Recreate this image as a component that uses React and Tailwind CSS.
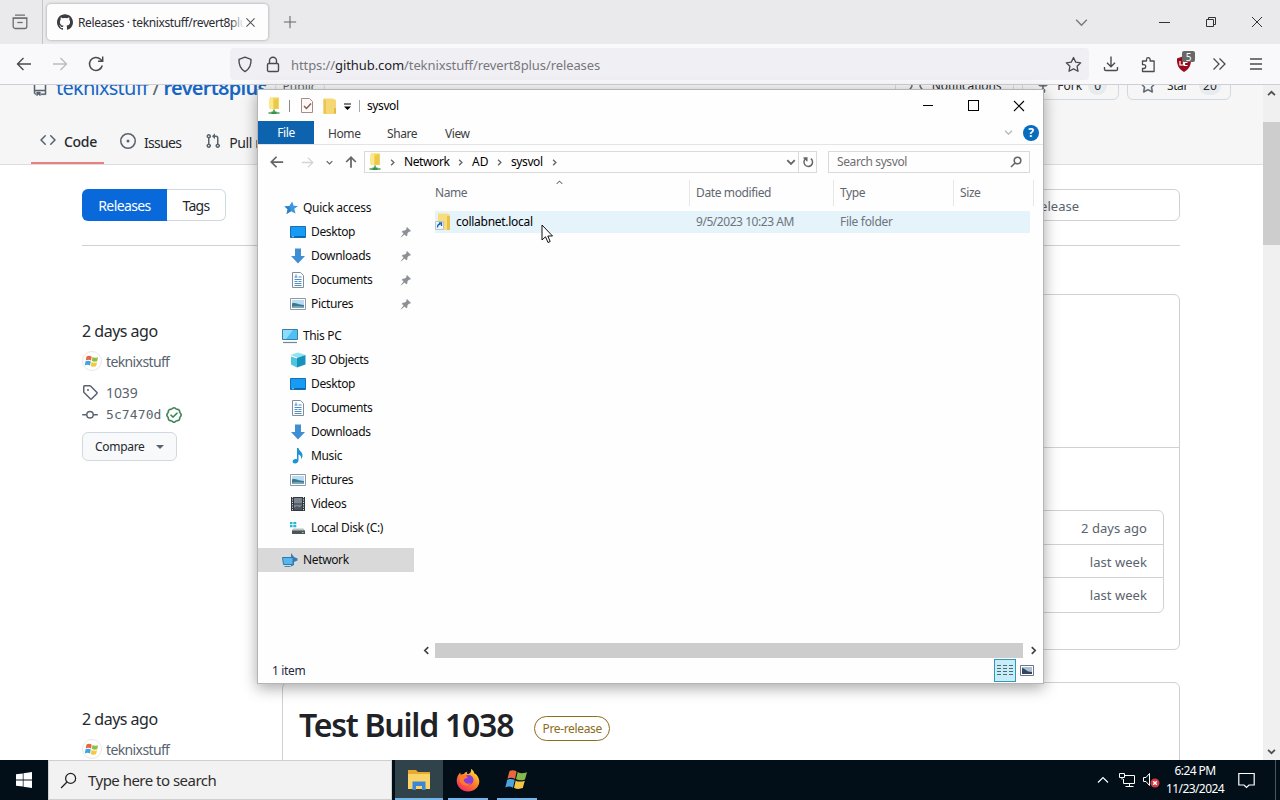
import React from 'react'
import { GoBell, GoRepo, GoRepoForked, GoStar, GoVerified } from 'react-icons/go'
import { SiGithub } from 'react-icons/si'

/* ---------- Generic icons ---------- */

const Stroke = ({ d, size = 16, className = '', width = 1.3 }) => (
  <svg width={size} height={size} viewBox="0 0 16 16" fill="none" stroke="currentColor" strokeWidth={width} className={`shrink-0 ${className}`}>
    <path d={d} />
  </svg>
)

const CHEVRON_DOWN = 'M3 5.5l5 5 5-5'
const CHEVRON_UP = 'M3 10.5l5-5 5 5'
const CHEVRON_LEFT = 'M10.5 3l-5 5 5 5'
const CHEVRON_RIGHT = 'M5.5 3l5 5-5 5'
const CLOSE = 'M3 3l10 10M13 3L3 13'
const ARROW_LEFT = 'M15 8H1.5M7.5 2l-6 6 6 6'
const ARROW_RIGHT = 'M1 8h13.5M8.5 2l6 6-6 6'
const ARROW_UP = 'M8 14.5V2.5M2.5 8L8 2.5 13.5 8'

/* 16px octicons, heavier than the 24px set in react-icons */
const Octicon = ({ d }) => (
  <svg width="16" height="16" viewBox="0 0 16 16" fill="currentColor" className="shrink-0 text-[#59636e]">
    <path d={d} />
  </svg>
)

const CODE = 'm11.28 3.22 4.25 4.25a.75.75 0 0 1 0 1.06l-4.25 4.25a.749.749 0 0 1-1.275-.326.749.749 0 0 1 .215-.734L13.94 8l-3.72-3.72a.749.749 0 0 1 .326-1.275.749.749 0 0 1 .734.215Zm-6.56 0a.751.751 0 0 1 1.042.018.751.751 0 0 1 .018 1.042L2.06 8l3.72 3.72a.749.749 0 0 1-.326 1.275.749.749 0 0 1-.734-.215L.47 8.53a.75.75 0 0 1 0-1.06Z'
const ISSUE = 'M8 9.5a1.5 1.5 0 1 0 0-3 1.5 1.5 0 0 0 0 3ZM8 0a8 8 0 1 1 0 16A8 8 0 0 1 8 0ZM1.5 8a6.5 6.5 0 1 0 13 0 6.5 6.5 0 0 0-13 0Z'
const PULL = 'M1.5 3.25a2.25 2.25 0 1 1 3 2.122v5.256a2.251 2.251 0 1 1-1.5 0V5.372A2.25 2.25 0 0 1 1.5 3.25Zm5.677-.177L9.573.677A.25.25 0 0 1 10 .854V2.5h1A2.5 2.5 0 0 1 13.5 5v5.628a2.251 2.251 0 1 1-1.5 0V5a1 1 0 0 0-1-1h-1v1.646a.25.25 0 0 1-.427.177L7.177 3.427a.25.25 0 0 1 0-.354ZM3.75 2.5a.75.75 0 1 0 0 1.5.75.75 0 0 0 0-1.5Zm0 9.5a.75.75 0 1 0 0 1.5.75.75 0 0 0 0-1.5Zm8.25.75a.75.75 0 1 0 1.5 0 .75.75 0 0 0-1.5 0Z'
const TAG = 'M1 7.775V2.75C1 1.784 1.784 1 2.75 1h5.025c.464 0 .91.184 1.238.513l6.25 6.25a1.75 1.75 0 0 1 0 2.474l-5.026 5.026a1.75 1.75 0 0 1-2.474 0l-6.25-6.25A1.752 1.752 0 0 1 1 7.775Zm1.5 0c0 .066.026.13.073.177l6.25 6.25a.25.25 0 0 0 .354 0l5.025-5.025a.25.25 0 0 0 0-.354l-6.25-6.25a.25.25 0 0 0-.177-.073H2.75a.25.25 0 0 0-.25.25ZM6 5a1 1 0 1 1 0 2 1 1 0 0 1 0-2Z'
const COMMIT = 'M11.93 8.5a4.002 4.002 0 0 1-7.86 0H.75a.75.75 0 0 1 0-1.5h3.32a4.002 4.002 0 0 1 7.86 0h3.32a.75.75 0 0 1 0 1.5Zm-1.43-.75a2.5 2.5 0 1 0-5 0 2.5 2.5 0 0 0 5 0Z'

/* ---------- Explorer icons ---------- */

const NetFolderIcon = () => (
  <svg width="14" height="18" viewBox="0 0 14 18" className="shrink-0">
    <path d="M3 .5h9V12H3z" fill="#f5d555" />
    <path d="M2 2l4-1.500v12L2 11z" fill="#fbe88d" />
    <path d="M10 1.500v10M8 3v9" stroke="#dfbc45" />
    <path d="M7 12.500V15M1.500 16h11" stroke="#4a9e55" strokeWidth="1.600" />
    <path d="M4.500 14.500h5V17h-5z" fill="#3b9148" />
  </svg>
)

const FolderIcon = () => (
  <svg width="16" height="18" viewBox="0 0 16 18" className="shrink-0">
    <path d="M1.500 1.500h9l3.500 1.500v14H1.500z" fill="#f5d874" />
    <path d="M1.500 2l2.500 1.500V17l-2.500-.5z" fill="#ebc552" />
    <path d="M12 11h2v5.500h-2z" fill="#e3b948" />
  </svg>
)

const ShortcutFolderIcon = () => (
  <svg width="17" height="18" viewBox="0 0 17 18" className="shrink-0">
    <path d="M3 .5h9L15 2v15H3z" fill="#f7dd7b" />
    <path d="M12 3h3v14h-3z" fill="#e8c04c" />
    <path d="M.5 8.500h8v8h-8z" fill="#eef5fb" stroke="#a9bccb" strokeWidth=".8" />
    <path d="M2.500 14.500c0-2.500 1-3.500 3-3.500M4 10h2.500v3" stroke="#1b62b0" strokeWidth="1.300" fill="none" />
  </svg>
)

const PropertiesIcon = () => (
  <svg width="14" height="17" viewBox="0 0 14 17" className="shrink-0">
    <path d="M1.500 1.500h8l3 3v11h-11z" fill="#fdfaf8" stroke="#a58d86" />
    <path d="M4 9l2.500 2.500L11 6.500" stroke="#8b5d52" strokeWidth="1.500" fill="none" />
  </svg>
)

const StarIcon = () => (
  <svg width="16" height="16" viewBox="0 0 16 16" className="shrink-0">
    <path d="M9.200 1.500l1.400 4.200 4.400.2-3.700 2.800 1.200 4.800L8 11.200 3.500 14l1.200-4.700L1.500 6.500l4.800-.6z" fill="#3d97dc" />
    <path d="M1.500 6.500l4.800-.6L8 11.200 3.500 14l1.200-4.700z" fill="#2f80c4" />
  </svg>
)

const DesktopIcon = () => (
  <svg width="16" height="16" viewBox="0 0 16 16" className="shrink-0">
    <path d="M.5 2.500h15v11H.5z" fill="#179bf4" stroke="#1670b5" />
    <path d="M1 12h14v1.500H1z" fill="#0d68b3" />
    <path d="M2 12.700h2" stroke="#8fd0ff" />
  </svg>
)

const DownloadsIcon = () => (
  <svg width="16" height="16" viewBox="0 0 16 16" className="shrink-0">
    <path d="M5 .5h6V8h4l-7 7.500L1 8h4z" fill="#3f8ed4" />
  </svg>
)

const DocumentsIcon = () => (
  <svg width="16" height="16" viewBox="0 0 16 16" className="shrink-0">
    <path d="M2.500.5h8l3 3v12h-11z" fill="#fff" stroke="#7d8f9e" />
    <path d="M4.500 5h3M4.500 7.500h7M4.500 9.500h3M4.500 11.500h7M4.500 13.500h7M8.500 5h3M6 2.500v3M8.500 9.500h3" stroke="#4c8fc7" />
  </svg>
)

const PicturesIcon = () => (
  <svg width="16" height="16" viewBox="0 0 16 16" className="shrink-0">
    <path d="M.5 2.500h15v11H.5z" fill="#fff" stroke="#8c9aa6" />
    <path d="M2 4h12v8H2z" fill="#b9dcf2" />
    <path d="M2 7.500c3-1.500 5 1 12 1.500v3H2z" fill="#3e7790" />
    <path d="M2 10.500c4-1 8-.5 12 0V12H2z" fill="#7fa7b7" />
  </svg>
)

const ThisPcIcon = () => (
  <svg width="16" height="16" viewBox="0 0 16 16" className="shrink-0">
    <path d="M.5 1.500h15v10H.5z" fill="#4fc0f4" stroke="#3a7fa8" />
    <path d="M1 2h10L4 11H1z" fill="#8edcfb" />
    <path d="M1 14.500h14" stroke="#6f8796" strokeWidth="1.200" />
  </svg>
)

const ObjectsIcon = () => (
  <svg width="16" height="16" viewBox="0 0 16 16" className="shrink-0">
    <path d="M.5 3L8 .5 15.500 3 8 6z" fill="#8fe3ee" />
    <path d="M1 4.500L7 6.500v9l-6-3z" fill="#4cc6dc" />
    <path d="M7 6l8.500-3v9.500L7 15.500z" fill="#1a91bd" />
  </svg>
)

const MusicIcon = () => (
  <svg width="16" height="16" viewBox="0 0 16 16" className="shrink-0">
    <path d="M7 0h1.500c.5 3 4.500 4 4 8-.2 1.500-1 2.500-1.500 3 .5-3-1-4-2.500-4.500V12c0 2-1.500 3.500-3.500 3.500-3.500 0-3-4.500.5-4.500.6 0 1 .1 1.500.3z" fill="#1d93d6" />
  </svg>
)

const VideosIcon = () => (
  <svg width="16" height="16" viewBox="0 0 16 16" className="shrink-0">
    <path d="M1 1h14v14H1z" fill="#33363a" />
    <path d="M4 2h8v5.500H4zM4 8.500h8V14H4z" fill="#7b8592" />
    <path d="M2.500 1v14M13.500 1v14" stroke="#d8dcdf" strokeDasharray="1.200 1.200" />
    <path d="M4 12l3-2 2 1.500 3-2V14H4z" fill="#4c5563" />
  </svg>
)

const DiskIcon = () => (
  <svg width="16" height="16" viewBox="0 0 16 16" className="shrink-0">
    <path d="M0 2h2.500v2.200H0zM3.300 2h3v2.200h-3zM0 5h2.500v2.200H0zM3.300 5h3v2.200h-3z" fill="#2bb5d8" />
    <path d="M3 8.500h10.500L15 11H2z" fill="#b9bfc2" />
    <path d="M2 10.500h13V14H2z" fill="#4d5357" />
    <path d="M12 12.500h1.500" stroke="#7ee787" />
  </svg>
)

const NetworkIcon = () => (
  <svg width="17" height="16" viewBox="0 0 17 16" className="shrink-0">
    <path d="M10 5V1l3 4 3.500 1.500v2L13 10v3l-3 1.500z" fill="#3b79b3" />
    <path d="M1.500 5.500H12v7H2.500z" fill="#56b7ef" stroke="#2e78ad" />
    <path d="M3.500 14.500h6" stroke="#4f88ad" />
  </svg>
)

const PinIcon = () => (
  <svg width="12" height="12" viewBox="0 0 12 12" className="shrink-0">
    <path d="M7 1l4 4-1 .8-.8-.2L7.500 7.300 7.300 9.500l-1 .8L4.500 8.500 1 11.500l-.3-.3L3.500 7.500 1.800 5.700l.9-.9 2.200-.2 1.700-1.700L6.300 2z" fill="#8b9094" />
  </svg>
)

const MagnifierIcon = ({ size, className = '' }) => (
  <svg width={size} height={size} viewBox="0 0 16 16" fill="none" stroke="currentColor" strokeWidth="1.200" className={className}>
    <circle cx="10" cy="6" r="4.700" />
    <path d="M6.600 9.400L1 15" />
  </svg>
)

/* ---------- Browser chrome ---------- */

const TabStrip = () => (
  <div className="flex h-11 shrink-0 items-center bg-[#eaeaed] text-[#46464d]">
    <div className="flex h-full w-[43px] items-center border-r border-[#c4c4ca] pl-[11px]">
      <svg width="18" height="18" viewBox="0 0 18 18" fill="none" stroke="#6d6d72" strokeWidth="1.300">
        <path d="M4 2.200h10M1.700 5.200h14.600" />
        <path d="M2.200 5.200h13.600v8.300a2 2 0 0 1-2 2H4.200a2 2 0 0 1-2-2z" />
        <path d="M6.300 9.500h5.400" />
      </svg>
    </div>
    <div className="ml-1 flex h-9 w-[221px] items-center rounded bg-[#fdfdfd] pr-[11px] shadow-[0_0_3px_rgba(0,0,0,0.35)]">
      <SiGithub className="ml-2.5 h-4 w-4 shrink-0 text-[#3c3c40]" />
      <div className="relative ml-[5px] w-[166px] overflow-hidden whitespace-nowrap pt-px text-[12px] tracking-[-0.38px] text-[#2b2b31]">
        Releases · teknixstuff/revert8plus
        <div className="absolute inset-y-0 right-0 w-3.5 bg-linear-to-r from-transparent to-[#fdfdfd]" />
      </div>
      <Stroke d={CLOSE} size={13} className="text-[#55555a]" />
    </div>
    <Stroke d="M8 1v14M1 8h14" size={14} className="ml-[15px] text-[#65656a]" width={1.2} />
    <div className="ml-auto flex items-center">
      <Stroke d={CHEVRON_DOWN} size={17} className="mr-[69px] text-[#77777c]" />
      <div className="mr-[35px] h-px w-[11px] bg-[#333]" />
      <svg width="12" height="12" viewBox="0 0 12 12" fill="none" stroke="#333" className="mr-8">
        <path d="M1.500 3.500h7v7h-7zM3.500 3.500v-2h7v7h-2" />
      </svg>
      <Stroke d={CLOSE} size={16} className="mr-[15px] text-[#333]" width={1} />
    </div>
  </div>
)

const Toolbar = () => (
  <div className="flex h-[41px] shrink-0 items-center border-b border-[#cfcfd3] bg-[#f9f9fb] text-[#4a4a50]">
    <Stroke d={ARROW_LEFT} size={16} className="ml-4" width={1.4} />
    <Stroke d={ARROW_RIGHT} size={16} className="ml-5 text-[#bcbcc0]" width={1.4} />
    <svg width="18" height="18" viewBox="0 0 18 18" fill="none" stroke="currentColor" strokeWidth="1.500" className="ml-[19px]">
      <path d="M15.300 10.500A6.500 6.500 0 1 1 13.500 4.200l2 1.800M15.700 1.500v4.700H11" />
    </svg>
    <div className="ml-[125px] flex h-8 w-[859px] items-center rounded bg-[#f0f0f4] pl-[7px]">
      <svg width="16" height="17" viewBox="0 0 16 17" fill="none" stroke="currentColor" strokeWidth="1.400">
        <path d="M8 1.200l6 2.200c.3 5.500-1.500 9.700-6 12.200-4.500-2.500-6.300-6.700-6-12.200z" strokeLinejoin="round" />
      </svg>
      <svg width="14" height="17" viewBox="0 0 14 17" fill="none" stroke="currentColor" strokeWidth="1.400" className="ml-[13px]">
        <rect x="1.500" y="7.500" width="11" height="8" rx="1.300" />
        <path d="M3.500 7.500V4.700a3.500 3.500 0 0 1 7 0v2.800" />
      </svg>
      <div className="ml-[11px] pt-[3px] text-[13px] tracking-[-0.09px] text-[#77777d]">
        https://<span className="text-[#222227]">github.com</span>/teknixstuff/revert8plus/releases
      </div>
      <svg width="17" height="17" viewBox="0 0 17 17" fill="none" stroke="currentColor" strokeWidth="1.300" className="ml-auto mr-[7px]">
        <path d="M8.500 1.500l2.200 4.600 5 .7-3.600 3.500.9 5-4.500-2.400L4 15.300l.9-5L1.300 6.800l5-.7z" strokeLinejoin="round" />
      </svg>
    </div>
    <svg width="16" height="16" viewBox="0 0 16 16" fill="none" stroke="currentColor" strokeWidth="1.400" className="ml-[14px]">
      <path d="M8 .5v10M4 6.700l4 4 4-4M1.500 11v2.200c0 .8.5 1.300 1.300 1.300h10.400c.8 0 1.300-.5 1.300-1.300V11" />
    </svg>
    <svg width="17" height="17" viewBox="0 0 17 17" fill="none" stroke="currentColor" strokeWidth="1.300" className="ml-[21px]">
      <path d="M2.500 6.200V5h4V3.500a1.800 1.800 0 0 1 3.600 0V5h4v10.500H2.500v-3h1.300a1.900 1.900 0 0 0 0-3.800H2.500z" strokeLinejoin="round" />
    </svg>
    <div className="relative ml-[19px] h-[18px] w-4">
      <svg width="16" height="18" viewBox="0 0 16 18">
        <path d="M8 1l7 2.500c.3 6-1.500 10.500-7 13.500C2.500 14 .7 9.500 1 3.500z" fill="#9a0a1c" />
        <path d="M4 6v4h3.500V6M11.500 7.500h-3v3h3" stroke="#fff" fill="none" strokeWidth="1.200" />
      </svg>
      <div className="absolute -top-1 left-[6px] flex h-[11px] w-[13px] items-center justify-center rounded-[2px] bg-[#686868] text-[10px] leading-none text-white">5</div>
    </div>
    <Stroke d="M2.500 2.500L8 8l-5.500 5.500M8.500 2.500L14 8l-5.500 5.500" size={16} className="ml-[19px]" />
    <Stroke d="M2 3h12M2 8h12M2 13h12" size={16} className="ml-[21px]" />
  </div>
)

/* ---------- GitHub page ---------- */

const Avatar = () => (
  <div className="flex h-5 w-5 items-center justify-center rounded-full border border-[#e8e8ea]">
    <svg width="14" height="14" viewBox="0 0 14 14">
      <path d="M1.500 2.500c2-1 3.500-.8 5.200.2L6 6.500C4.500 5.500 3 5.500.8 6.300z" fill="#e8663f" />
      <path d="M7.500 3c1.500 1 3 1 5.500.2l-.8 4c-2 .8-3.800.6-5.400-.4z" fill="#8cbf45" />
      <path d="M.6 7.300c2-.8 3.500-.7 5.200.3L5 11.500c-1.500-1-3-1-5.200-.2z" fill="#3ba7e0" />
      <path d="M6.600 8c1.600 1 3.200 1.100 5.400.3l-.9 4c-2 .8-3.700.6-5.300-.4z" fill="#f7c73e" />
    </svg>
  </div>
)

const RepoHeader = () => (
  <div className="h-[80px] shrink-0 overflow-hidden border-b border-[#dcdddf] bg-[#f6f6f6]">
    <div className="-mt-3 flex h-[30px] items-center">
      <GoRepo className="ml-8 h-4 w-4 stroke-[0.8px] text-[#59636e]" />
      <div className="ml-2 whitespace-nowrap text-[20px] leading-[30px] tracking-[-0.75px] text-[#1766c4]">
        teknixstuff <span className="text-[#59636e]">/</span> <span className="font-semibold">revert8plus</span>
      </div>
      <div className="ml-2 h-5 rounded-full border border-[#d1d9e0] px-[7px] text-[12px] leading-[16px] text-[#59636e]">Public</div>
      <div className="mb-1 ml-auto mr-8 flex gap-2 text-[12px] leading-5 text-[#25292e]">
        <div className="flex h-7 items-center gap-2 rounded-md border border-[#d1d9e0] px-3">
          <GoBell className="h-4 w-4 stroke-[0.8px] text-[#59636e]" />
          <span className="tracking-[-0.15px]">Notifications</span>
        </div>
        <div className="flex h-7 items-center gap-1.5 rounded-md border border-[#d1d9e0] pl-3 pr-[11px]">
          <GoRepoForked className="h-4 w-4 stroke-[0.8px] text-[#59636e]" />
          <span>Fork</span>
          <span className="rounded-full bg-[#e8ebee] px-1.5 leading-[18px]">0</span>
        </div>
        <div className="flex h-7 w-[104px] items-center gap-[11px] rounded-md border border-[#d1d9e0] pl-3">
          <GoStar className="h-4 w-4 stroke-[0.8px] text-[#59636e]" />
          <span className="tracking-[-0.4px]">Star</span>
          <span className="rounded-full bg-[#e8ebee] px-1 leading-[18px]">20</span>
        </div>
      </div>
    </div>
    <div className="mt-[15px] flex h-[46px] pl-[31px] text-[14px] text-[#25292e]">
      <div className="flex h-full w-[73px] items-center border-b-2 border-[#ea7f80] pl-[9px] tracking-[-0.3px]">
        <Octicon d={CODE} />
        <span className="ml-2 pt-0.5 font-medium">Code</span>
      </div>
      <div className="ml-4 flex h-full items-center tracking-[-0.7px]">
        <Octicon d={ISSUE} />
        <span className="ml-2 pt-0.5">Issues</span>
      </div>
      <div className="ml-6 flex h-full items-center tracking-[-0.4px]">
        <Octicon d={PULL} />
        <span className="ml-2 whitespace-nowrap pt-0.5">Pull requests</span>
      </div>
    </div>
  </div>
)

const ReleaseMeta = () => (
  <div className="w-[200px] shrink-0 pt-[25px] text-[#59636e]">
    <div className="text-[16px] leading-6 tracking-[-0.5px] text-[#25292e]">2 days ago</div>
    <div className="mt-[7px] flex h-[22px] items-center text-[14px] tracking-[-0.62px]">
      <Avatar />
      <span className="ml-1">teknixstuff</span>
    </div>
    <div className="mt-[9px] flex h-[22px] items-center text-[14px] tracking-[-0.1px]">
      <Octicon d={TAG} />
      <span className="ml-2">1039</span>
    </div>
    <div className="mt-0.5 flex h-5 items-center">
      <Octicon d={COMMIT} />
      <span className="ml-2 font-['DejaVu_Sans_Mono',monospace] text-[13px] tracking-[0.1px]">5c7470d</span>
      <GoVerified className="ml-1 h-4 w-4 stroke-[0.8px] text-[#2c7a48]" />
    </div>
    <div className="mt-[7px] flex h-[29px] w-[95px] items-center rounded-md border border-[#d1d9e0] bg-[#f8f9fa] pl-3 text-[12px] tracking-[-0.3px] text-[#25292e]">
      Compare
      <div className="ml-[11px] border-x-4 border-t-4 border-x-transparent border-t-[#59636e]" />
    </div>
  </div>
)

const assets = ['2 days ago', 'last week', 'last week']

const ReleasesPage = () => (
  <div className="flex flex-1 flex-col overflow-hidden bg-white">
    <RepoHeader />
    <div className="flex flex-col pl-[82px] pr-[83px] pt-6">
      <div className="flex h-8 items-stretch text-[14px]">
        <div className="flex w-[85px] items-center justify-center rounded-l-md bg-[#0969da] pt-px tracking-[-0.6px] text-white">Releases</div>
        <div className="flex w-[59px] items-center justify-center rounded-r-md border border-l-0 border-[#d1d9e0] pt-px tracking-[-0.7px] text-[#25292e]">Tags</div>
        <div className="ml-auto flex w-[220px] items-center justify-end rounded-md border border-[#d1d1d3] pr-[100px] pt-[3px] text-[13px] text-[#59636e]">Find a release</div>
      </div>
      <div className="mt-6 border-b border-[#d1d1d3]" />
      <div className="mt-12 flex">
        <ReleaseMeta />
        <div className="flex h-[356px] flex-1 flex-col rounded-md border border-[#d1d1d3]">
          <div className="h-[153px] border-b border-[#d1d1d3]" />
          <div className="mx-[15px] mt-[62px] rounded-md border border-[#d1d1d3]">
            {assets.map((age, i) => (
              <div key={i} className="flex h-[33.5px] items-center justify-end border-b border-[#d1d1d3] pr-4 pt-[3px] text-[13px] tracking-[0.05px] text-[#59636e] last:border-b-0 last:pt-px">
                {age}
              </div>
            ))}
          </div>
        </div>
      </div>
      <div className="mt-8 flex">
        <ReleaseMeta />
        <div className="h-[300px] flex-1 rounded-md border border-[#d1d1d3] pl-4 pt-[18px]">
          <div className="flex h-12 items-center">
            <h1 className="whitespace-nowrap text-[32px] font-semibold leading-[48px] tracking-[-1.25px] text-[#1f2328]">Test Build 1038</h1>
            <div className="ml-[21px] mt-1.5 flex h-[25px] w-[76px] items-center justify-center rounded-full border border-[#8c6d1c] pt-px text-[12px] tracking-[-0.35px] text-[#8c6d1c]">Pre-release</div>
          </div>
        </div>
      </div>
    </div>
  </div>
)

const PageScrollbar = () => (
  <div className="flex w-[17px] flex-col items-center bg-[#f0f0f0] text-[#505050]">
    <div className="flex h-[37px] items-start pt-[3px]">
      <Stroke d={CHEVRON_UP} size={11} width={2.6} />
    </div>
    <div className="h-[123px] w-full bg-[#cdcdcd]" />
    <div className="mt-auto flex h-[17px] items-center">
      <Stroke d={CHEVRON_DOWN} size={11} width={2.6} />
    </div>
  </div>
)

/* ---------- Explorer window ---------- */

const quickAccess = [
  { name: 'Desktop', Icon: DesktopIcon },
  { name: 'Downloads', Icon: DownloadsIcon },
  { name: 'Documents', Icon: DocumentsIcon },
  { name: 'Pictures', Icon: PicturesIcon }
]

const thisPc = [
  { name: '3D Objects', Icon: ObjectsIcon },
  { name: 'Desktop', Icon: DesktopIcon },
  { name: 'Documents', Icon: DocumentsIcon },
  { name: 'Downloads', Icon: DownloadsIcon },
  { name: 'Music', Icon: MusicIcon },
  { name: 'Pictures', Icon: PicturesIcon },
  { name: 'Videos', Icon: VideosIcon },
  { name: 'Local Disk (C:)', Icon: DiskIcon }
]

const TreeItem = ({ name, Icon, pinned }) => (
  <div className="flex h-6 items-center pl-8 pr-0.5">
    <Icon />
    <span className="ml-[5px] whitespace-nowrap">{name}</span>
    {pinned && <span className="ml-auto"><PinIcon /></span>}
  </div>
)

const Sidebar = () => (
  <div className="w-[156px] shrink-0 pt-[19px] tracking-[-0.36px] text-[#101010]">
    <div className="flex h-6 items-center pl-[25px]"><StarIcon /><span className="ml-1 tracking-[-0.3px]">Quick access</span></div>
    {quickAccess.map((item) => <TreeItem key={item.name} {...item} pinned />)}
    <div className="mt-2 flex h-6 items-center pl-6"><ThisPcIcon /><span className="ml-[5px]">This PC</span></div>
    {thisPc.map((item) => <TreeItem key={item.name} {...item} />)}
    <div className="mt-2 flex h-6 items-center bg-[#d9d9d9] pl-[23px]"><NetworkIcon /><span className="ml-[5px]">Network</span></div>
  </div>
)

const TitleBar = () => (
  <div className="flex h-[31px] shrink-0 items-center text-black">
    <div className="ml-[9px]"><NetFolderIcon /></div>
    <div className="ml-2 h-3 w-px bg-[#8a8a8a]" />
    <div className="ml-[10px]"><PropertiesIcon /></div>
    <div className="ml-2"><FolderIcon /></div>
    <svg width="9" height="8" viewBox="0 0 9 8" className="ml-[5px] mt-0.5">
      <path d="M1 .5h7v1H1zM1 3.500h7L4.500 7z" />
    </svg>
    <div className="ml-[7px] h-3 w-px bg-[#a8a8a8]" />
    <span className="ml-[7px] tracking-[-0.4px]">sysvol</span>
    <div className="ml-auto h-px w-2.5 bg-black" />
    <div className="ml-[35px] h-[11px] w-[11px] border border-black" />
    <Stroke d={CLOSE} size={16} width={1.1} className="ml-8 mr-4" />
  </div>
)

const RibbonTabs = () => (
  <div className="flex h-6 shrink-0 items-center border-b border-[#e3e4e6] tracking-[-0.4px] text-[#3c3c3c]">
    <div className="flex h-[23px] w-14 items-center justify-center bg-[#0d63ad] pt-px text-white">File</div>
    <span className="ml-3.5 w-[59px] pt-0.5">Home</span>
    <span className="w-[58px] pt-0.5">Share</span>
    <span className="pt-0.5">View</span>
    <Stroke d={CHEVRON_DOWN} size={11} className="ml-auto text-[#b4b4b4]" width={1.8} />
    <div className="ml-[9px] mr-1 flex h-4 w-4 items-center justify-center rounded-full bg-[#0a6cbd] text-[12px] font-bold leading-none text-white">?</div>
  </div>
)

const AddressRow = () => (
  <div className="flex h-[34px] shrink-0 items-center text-[#666]">
    <Stroke d={ARROW_LEFT} size={14} className="ml-3" width={2} />
    <Stroke d={ARROW_RIGHT} size={13} className="ml-[17px] text-[#d4d4d4]" width={1.6} />
    <Stroke d={CHEVRON_DOWN} size={9} className="ml-[11px]" width={2.2} />
    <Stroke d={ARROW_UP} size={14} className="ml-[10px]" width={2} />
    <div className="ml-[6px] flex h-[22px] w-[453px] items-center border border-[#dadada] text-black">
      <div className="ml-[3px]"><NetFolderIcon /></div>
      <Stroke d={CHEVRON_RIGHT} size={9} className="ml-[6px] text-[#666]" width={2.4} />
      <span className="ml-[7px] w-[52px] whitespace-nowrap tracking-[-0.4px]">Network</span>
      <Stroke d={CHEVRON_RIGHT} size={9} className="text-[#666]" width={2.4} />
      <span className="ml-[7px] w-[23px]">AD</span>
      <Stroke d={CHEVRON_RIGHT} size={9} className="text-[#666]" width={2.4} />
      <span className="ml-[7px] w-[39px] tracking-[-0.4px]">sysvol</span>
      <Stroke d={CHEVRON_RIGHT} size={9} className="text-[#666]" width={2.4} />
      <Stroke d={CHEVRON_DOWN} size={12} className="ml-auto mr-px text-[#666]" width={2.4} />
      <div className="flex h-full w-[18px] items-center justify-center border-l border-[#dadada]">
        <svg width="12" height="12" viewBox="0 0 12 12" fill="none" stroke="#666" strokeWidth="1.500">
          <path d="M8.800 2.700A4.300 4.300 0 1 1 4 2.500M1.500 2h3.300v3.300" />
        </svg>
      </div>
    </div>
    <div className="ml-[11px] flex h-[22px] w-[202px] items-center justify-between border border-[#dadada] pl-2 pr-[7px] text-[#6e6e6e]">
      <span className="tracking-[-0.4px]">Search sysvol</span>
      <svg width="12" height="12" viewBox="0 0 12 12" fill="none" stroke="#666" strokeWidth="1.600">
        <circle cx="7.500" cy="4.500" r="3.300" />
        <path d="M5 7L1 11" />
      </svg>
    </div>
  </div>
)

const FileList = () => (
  <div className="flex flex-1 flex-col">
    <div className="relative flex h-[26px] items-center pl-[21px] text-[#5f6670]">
      <Stroke d={CHEVRON_UP} size={9} className="absolute left-[141px] -top-0.5 text-[#777]" width={1.8} />
      <div className="flex h-full w-[255px] items-center border-r border-[#e7e7e7] tracking-[-0.4px]">Name</div>
      <div className="flex h-full w-[144px] items-center border-r border-[#e7e7e7] pl-1.5 tracking-[-0.38px]">Date modified</div>
      <div className="flex h-full w-[120px] items-center border-r border-[#e7e7e7] pl-1.5 tracking-[-0.4px]">Type</div>
      <div className="flex h-full w-[80px] items-center border-r border-[#e7e7e7] pl-1.5 tracking-[-0.4px]">Size</div>
    </div>
    <div className="ml-[21px] mr-[13px] mt-[5px] flex h-[22px] items-center bg-[#e5f3fb] text-[#6d747b]">
      <div className="flex w-[261px] items-center whitespace-nowrap text-black">
        <ShortcutFolderIcon />
        <span className="ml-1 tracking-[-0.28px]">collabnet.local</span>
      </div>
      <span className="w-[144px] whitespace-nowrap tracking-[-0.45px]">9/5/2023 10:23 AM</span>
      <span className="tracking-[-0.3px]">File folder</span>
    </div>
    <div className="mt-auto flex h-[17px] items-center pl-[7px] text-[#404040]">
      <Stroke d={CHEVRON_LEFT} size={11} width={2.4} />
      <div className="ml-[3px] h-[15px] w-[588px] bg-[#cdcdcd]" />
      <Stroke d={CHEVRON_RIGHT} size={11} className="ml-[5px]" width={2.4} />
    </div>
  </div>
)

const StatusBar = () => (
  <div className="flex h-6 shrink-0 items-center pb-px pl-[14px] text-[#1f2a44]">
    <span className="tracking-[-0.35px]">1 item</span>
    <div className="ml-auto flex h-[23px] w-[22px] items-center justify-center border border-[#2f9ab5] bg-[#c8edf7]">
      <svg width="16" height="14" viewBox="0 0 16 14" fill="none" stroke="#4c6b78">
        <path d="M0 1.500h4M0 4.500h4M0 7.500h4M0 10.500h4M6 1.500h4M6 4.500h4M6 7.500h4M6 10.500h4M12 1.500h4M12 4.500h4M12 7.500h4M12 10.500h4" />
      </svg>
    </div>
    <svg width="14" height="11" viewBox="0 0 14 11" className="ml-1 mr-[9px]">
      <path d="M.5.5h13v10H.5z" fill="#fff" stroke="#68788a" />
      <path d="M2 2h10v7H2z" fill="#a9bfd6" />
      <path d="M2 3c3 0 4 4 10 4v2H2z" fill="#33465c" />
    </svg>
  </div>
)

const ExplorerWindow = () => (
  <div className="absolute left-[257px] top-[89px] flex h-[595px] w-[787px] flex-col border border-[#b5b5b5] bg-[#fefefe] text-[12px] shadow-[0_4px_14px_rgba(0,0,0,0.35)]">
    <TitleBar />
    <RibbonTabs />
    <AddressRow />
    <div className="-mt-px flex flex-1">
      <div className="-mt-px w-[156px]"><Sidebar /></div>
      <div className="flex flex-1 flex-col pt-0.5"><FileList /></div>
    </div>
    <StatusBar />
  </div>
)

/* ---------- Taskbar ---------- */

const Taskbar = () => (
  <div className="flex h-10 shrink-0 items-stretch bg-[#020f19] text-white">
    <div className="flex w-12 items-center justify-center">
      <svg width="16" height="16" viewBox="0 0 16 16" fill="#fff">
        <path d="M0 2.300l6.800-.9v6.200H0zM7.500 1.300L16 0v7.600H7.500zM0 8.400h6.800v6.200L0 13.700zM7.500 8.400H16V16l-8.500-1.200z" />
      </svg>
    </div>
    <div className="flex w-[344px] items-center border border-[#cfcfcf] bg-[#f2f2f2] pl-[11px] text-[#2e2e2e]">
      <MagnifierIcon size={17} className="text-[#222]" />
      <span className="ml-[11px] text-[15px] tracking-[-0.52px]">Type here to search</span>
    </div>
    <div className="ml-[3px] flex w-12 flex-col items-center justify-between bg-[#30434a]">
      <svg width="24" height="24" viewBox="0 0 24 24" className="mt-2">
        <path d="M1 2h8l2 2h12v5H1z" fill="#e8a92e" />
        <path d="M1 6h22v15H1z" fill="#fbd468" />
        <path d="M5.500 22v-8.500h13V22h-3.500v-4H9v4z" fill="#3d86d6" />
      </svg>
      <div className="h-0.5 w-full bg-[#76b5ea]" />
    </div>
    <div className="ml-[5px] flex w-10 flex-col items-center justify-between">
      <svg width="24" height="24" viewBox="0 0 24 24" className="mt-2">
        <defs>
          <linearGradient id="fox" x1="0.900" y1="0" x2="0.200" y2="1">
            <stop offset="0" stopColor="#fff04a" />
            <stop offset="0.450" stopColor="#ff8a1f" />
            <stop offset="1" stopColor="#f0246b" />
          </linearGradient>
        </defs>
        <path d="M15 .8c2.500 1.700 3 3.500 3.500 5 .8 0 1.500.6 2 1 1.500 2 3 4.500 2.800 7.200C22.800 19.500 18 23.500 12 23.500S1 19 .7 13C.6 9.500 2 6.500 4.300 4.500l.4 2.300c1-.6 2-.9 3.200-.8 1-1.500 2-2 3.300-2.200-.5 1-.3 1.600.3 2.200 1 0 2-.3 2.700-1.200.8-1 1.200-2.300.8-4z" fill="url(#fox)" />
        <circle cx="12.500" cy="12" r="5" fill="#8a3bdc" />
        <path d="M4.500 7.500c3-1 5.500.3 7.500 1.500-1.500 1.800-3.500 1.300-4.500 3 1 3.500 4.500 4.500 7.500 3-1.500 3-8 4-10.500-.5-1.300-2.300-1-5 0-7z" fill="#ff7a2a" />
      </svg>
      <div className="h-0.5 w-full bg-[#76b5ea]" />
    </div>
    <div className="ml-[9px] flex w-10 flex-col items-center justify-between">
      <svg width="24" height="24" viewBox="0 0 24 24" className="mt-2">
        <path d="M4.500 3c2.500-1.200 4.700-1 7.200.5L10 11c-2.500-1.500-4.700-1.500-7.500-.4z" fill="#e6683c" />
        <path d="M12.700 4c2.500 1.500 5 1.600 9.300.3l-2 7.200c-3.500 1.300-6.500 1.100-9-.4z" fill="#86b84a" />
        <path d="M2.200 11.700c2.700-1.100 5-1 7.500.4L8 19.700C5.500 18.200 3.200 18.200.3 19.400z" fill="#4aa5de" />
        <path d="M10.700 12.400c2.500 1.500 5 1.600 9.100.3l-2 7.400c-3.500 1.200-6.300 1-8.800-.4z" fill="#f6c544" />
      </svg>
      <div className="h-0.5 w-full bg-[#76b5ea]" />
    </div>
    <div className="ml-auto flex items-center">
      <Stroke d={CHEVRON_UP} size={16} className="mr-2" width={1.2} />
      <svg width="17" height="16" viewBox="0 0 17 16" fill="none" stroke="#fff" className="mr-[7px]">
        <path d="M5.500 3.500h10v8h-11V7M10.500 11.500v3M6.500 14.500h8M.5 1.500h5v4h-5zM3 5.500v2" />
      </svg>
      <svg width="17" height="16" viewBox="0 0 17 16" fill="none" stroke="#fff">
        <path d="M.5 5.500H3l3.500-4v12l-3.500-4H.5z" />
        <circle cx="12" cy="11" r="4.500" fill="#d43a45" stroke="none" />
        <path d="M10.200 9.200l3.600 3.600M13.800 9.200l-3.600 3.600" strokeWidth="1.400" />
      </svg>
      <div className="ml-1 w-[62px] whitespace-nowrap text-center text-[12px] leading-[18px] tracking-[-0.6px]">
        <div>6:24 PM</div>
        <div>11/23/2024</div>
      </div>
      <svg width="17" height="17" viewBox="0 0 17 17" fill="none" stroke="#fff" className="ml-[12px] mr-[20px]">
        <path d="M.8 1.500h15.400v11.500H11L8.500 15.500 6 13H.8z" strokeWidth="1.200" />
      </svg>
      <div className="mr-1 h-10 w-px bg-[#4b555c]" />
    </div>
  </div>
)

const Cursor = () => (
  <svg width="13" height="20" viewBox="0 0 13 20" className="absolute left-[541px] top-[224px]">
    <path d="M1 1v15l3.500-3.200L7 18.500l2.200-1L6.800 12h4.700z" fill="#fff" stroke="#111" />
  </svg>
)

const App = () => (
  <div className="relative flex h-[800px] w-[1280px] flex-col overflow-hidden font-['Noto_Sans','Open_Sans',sans-serif]">
    <TabStrip />
    <Toolbar />
    <div className="flex min-h-0 flex-1">
      <ReleasesPage />
      <PageScrollbar />
    </div>
    <Taskbar />
    <ExplorerWindow />
    <Cursor />
  </div>
)

export default App
